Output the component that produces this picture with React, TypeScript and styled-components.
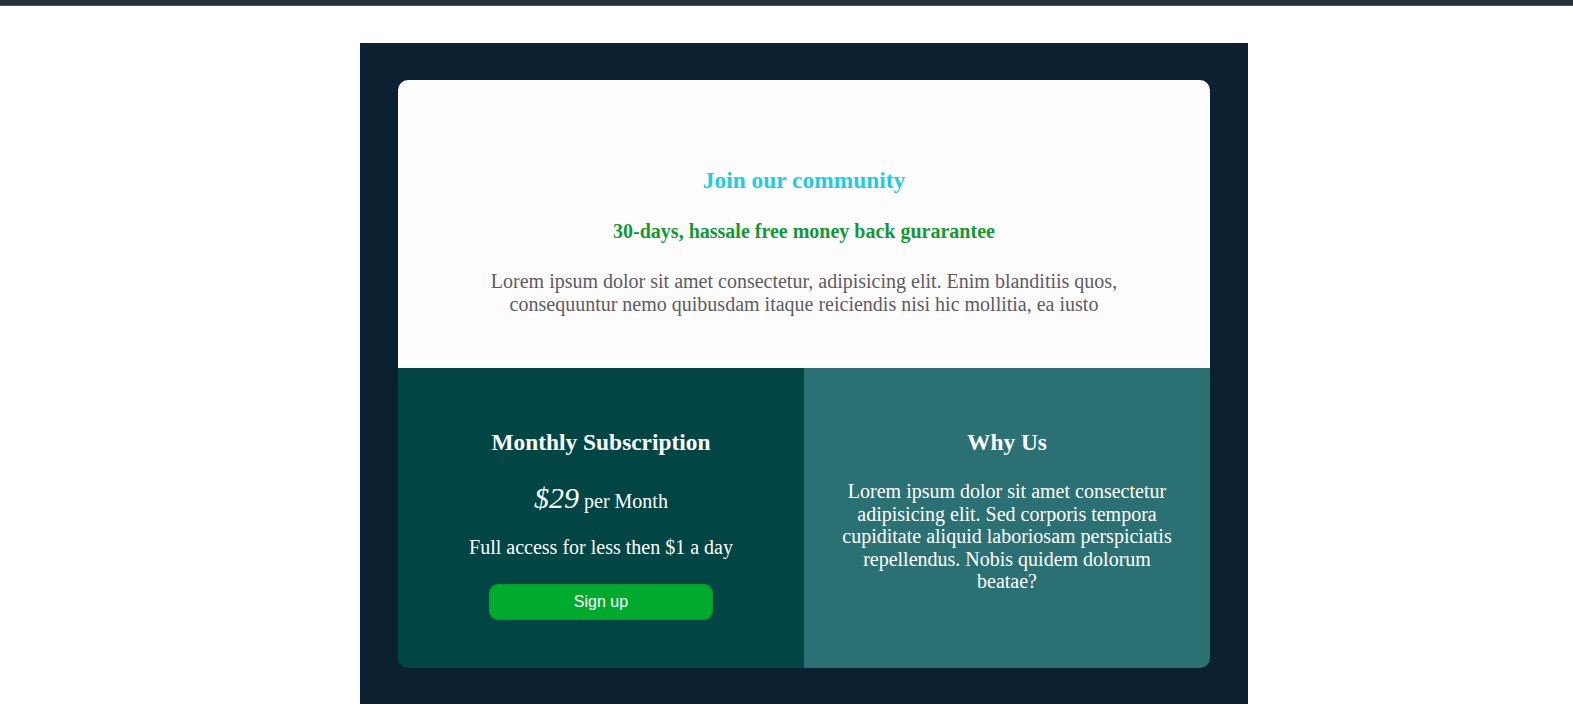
import React from "react";
import styled, { createGlobalStyle } from "styled-components";

const Global = createGlobalStyle`
  html, body { margin: 0; padding: 0; background: #ffffff; }
  body { font-family: "Liberation Serif", "Times New Roman", serif; font-size: 20px; }
`;

const TopBar = styled.div`
  height: 5px;
  background: #223138;
  border-bottom: 1px solid #46555c;
`;

const Stage = styled.main`
  width: 888px;
  margin: 37px 0 0 360px;
  padding: 37px 38px 36px;
  box-sizing: border-box;
  background: #0b2132;
`;

const Card = styled.section`
  border-radius: 10px;
  overflow: hidden;
  display: grid;
  grid-template-columns: 1fr 1fr;
  grid-template-rows: 288px 300px;
`;

const Intro = styled.div`
  grid-column: 1 / span 2;
  background: #fffcfd;
  display: flex;
  flex-direction: column;
  align-items: center;
  padding: 87px 80px 0;
  text-align: center;
`;

const Title = styled.h3`
  margin: 0;
  font-size: 23.4px;
  line-height: 27px;
  font-weight: 700;
  color: #1bcde6;
`;

const Guarantee = styled.h4`
  margin: 26px 0 0;
  font-size: 20px;
  line-height: 23px;
  font-weight: 700;
  color: #0e9b36;
`;

const Lead = styled.p`
  margin: 27px 0 0;
  font-size: 20px;
  line-height: 23px;
  color: #5b5b64;
`;

const Panel = styled.div<{ $bg: string }>`
  background: ${(p) => p.$bg};
  color: #ffffff;
  display: flex;
  flex-direction: column;
  align-items: center;
  text-align: center;
  padding: 61px 36px 0;
`;

const PanelTitle = styled.h3`
  margin: 0;
  font-size: 23.4px;
  line-height: 27px;
  font-weight: 700;
`;

const Price = styled.div`
  margin-top: 24px;
  font-size: 20px;
  line-height: 35px;
`;

const Amount = styled.span`
  font-size: 30px;
  font-style: italic;
`;

const Note = styled.p`
  margin: 17px 0 0;
  font-size: 20px;
  line-height: 23px;
`;

const SignUp = styled.button`
  margin-top: 25px;
  width: 224px;
  height: 36px;
  border-radius: 9px;
  border: 1px solid #0b9a2a;
  background: #00aa2c;
  color: #ffffff;
  font-family: "Liberation Sans", Arial, sans-serif;
  font-size: 16px;
  cursor: pointer;
`;

const Body = styled.p`
  margin: 24px 0 0;
  font-size: 20px;
  line-height: 22.6px;
`;

export default function App() {
  return (
    <>
      <Global />
      <TopBar />
      <Stage>
        <Card>
          <Intro>
            <Title>Join our community</Title>
            <Guarantee>30-days, hassale free money back gurarantee</Guarantee>
            <Lead>
              Lorem ipsum dolor sit amet consectetur, adipisicing elit. Enim blanditiis quos,
              consequuntur nemo quibusdam itaque reiciendis nisi hic mollitia, ea iusto
            </Lead>
          </Intro>
          <Panel $bg="#014545">
            <PanelTitle>Monthly Subscription</PanelTitle>
            <Price>
              <Amount>$29</Amount> per Month
            </Price>
            <Note>Full access for less then $1 a day</Note>
            <SignUp>Sign up</SignUp>
          </Panel>
          <Panel $bg="#2b7173">
            <PanelTitle>Why Us</PanelTitle>
            <Body>
              Lorem ipsum dolor sit amet consectetur adipisicing elit. Sed corporis tempora
              cupiditate aliquid laboriosam perspiciatis repellendus. Nobis quidem dolorum beatae?
            </Body>
          </Panel>
        </Card>
      </Stage>
    </>
  );
}
